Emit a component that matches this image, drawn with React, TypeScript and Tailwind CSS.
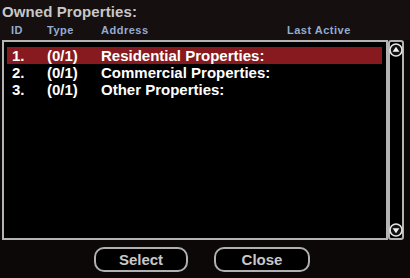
const rows = [
  { id: '1.', type: '(0/1)', address: 'Residential Properties:', active: true },
  { id: '2.', type: '(0/1)', address: 'Commercial Properties:', active: false },
  { id: '3.', type: '(0/1)', address: 'Other Properties:', active: false },
];

const ScrollArrow = ({ down }: { down?: boolean }) => (
  <svg width="14" height="14" viewBox="0 0 14 14" className="block">
    <circle cx="7" cy="7" r="6" fill="#111" stroke="#e6e6e6" strokeWidth="1.6" />
    {down ? (
      <path d="M3.6 5.2h6.8L7 10.2z" fill="#f2f2f2" />
    ) : (
      <path d="M3.6 8.8h6.8L7 3.8z" fill="#f2f2f2" />
    )}
  </svg>
);

export default function App() {
  return (
    <div className="w-[410px] h-[278px] overflow-hidden bg-[#0d0808] flex flex-col font-['Liberation_Sans',Arial,sans-serif]">
      <div className="h-[40px] bg-[#150f0f] flex flex-col">
        <div className="pl-[2px] pt-[3px] leading-[17px] text-[15px] font-bold tracking-[0.1px] text-[#c8c8c8]">
          Owned Properties:
        </div>
        <div className="mt-[4px] flex pl-[11px] leading-[13px] text-[11px] font-bold tracking-[0.5px] text-[#94acd2]">
          <span className="w-[36px]">ID</span>
          <span className="w-[54px]">Type</span>
          <span className="w-[186px]">Address</span>
          <span>Last Active</span>
        </div>
      </div>

      <div className="flex h-[200px]">
        <div className="ml-[2px] w-[386px] border-2 border-[#b4b4b4] bg-black pt-[5px] pl-[3px] pr-[4px]">
          {rows.map((r) => (
            <div
              key={r.id}
              className={`flex pl-[5px] h-[17px] leading-[17px] text-[15px] font-bold text-white ${r.active ? 'bg-[#871a1e]' : ''}`}>
              <span className="w-[35px]">{r.id}</span>
              <span className="w-[54px]">{r.type}</span>
              <span>{r.address}</span>
            </div>
          ))}
        </div>
        <div className="w-[16px] border-2 border-[#b4b4b4] rounded-[3px] bg-black flex flex-col justify-between items-center py-[1px]">
          <ScrollArrow />
          <ScrollArrow down />
        </div>
      </div>

      <div className="mt-[7px] flex pl-[94px] gap-[26px]">
        <button className="w-[94px] h-[25px] border-2 border-[#b0b0b0] rounded-[10px] bg-black text-[15px] font-bold text-[#c8c8c8] leading-[21px]">
          Select
        </button>
        <button className="w-[96px] h-[25px] border-2 border-[#b0b0b0] rounded-[10px] bg-black text-[15px] font-bold text-[#c8c8c8] leading-[21px]">
          Close
        </button>
      </div>
    </div>
  );
}
